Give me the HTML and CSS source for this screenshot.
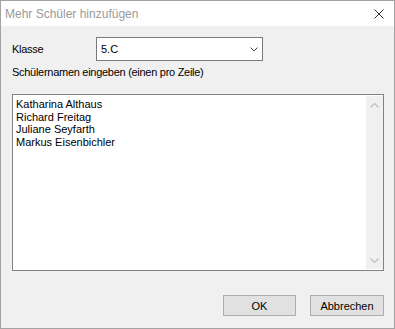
FILE: index.html
```html
<!DOCTYPE html>
<html lang="de">
<head>
<meta charset="utf-8">
<title>Mehr Schüler hinzufügen</title>
<link rel="stylesheet" href="styles.css">
</head>
<body>
<div class="window">
  <div class="titlebar">
    <span class="title">Mehr Schüler hinzufügen</span>
    <svg class="close" width="10" height="10" viewBox="0 0 10 10"><path d="M0.5 0.5 L9.5 9.5 M9.5 0.5 L0.5 9.5" stroke="#333" stroke-width="1" fill="none"/></svg>
  </div>
  <div class="content">
    <div class="row">
      <span class="label">Klasse</span>
      <div class="combo">
        <span class="combo-text">5.C</span>
        <svg class="chev" width="8" height="5" viewBox="0 0 8 5"><path d="M0.5 0.5 L4 4 L7.5 0.5" stroke="#444" stroke-width="1" fill="none"/></svg>
      </div>
    </div>
    <div class="hint">Schülernamen eingeben (einen pro Zeile)</div>
    <div class="memo">
      <div class="memo-text">
        <div class="line">Katharina Althaus</div>
        <div class="line">Richard Freitag</div>
        <div class="line">Juliane Seyfarth</div>
        <div class="line">Markus Eisenbichler</div>
      </div>
      <div class="scrollbar">
        <svg width="9" height="5" viewBox="0 0 9 5"><path d="M0.5 4.5 L4.5 0.5 L8.5 4.5" stroke="#c2c2c2" stroke-width="1.3" fill="none"/></svg>
        <svg width="9" height="5" viewBox="0 0 9 5"><path d="M0.5 0.5 L4.5 4.5 L8.5 0.5" stroke="#c2c2c2" stroke-width="1.3" fill="none"/></svg>
      </div>
    </div>
    <div class="buttons">
      <div class="btn">OK</div>
      <div class="btn">Abbrechen</div>
    </div>
  </div>
</div>
</body>
</html>
```
FILE: styles.css
```css
html, body {
  margin: 0;
  padding: 0;
  background: #f0f0f0;
}
.window {
  box-sizing: border-box;
  width: 395px;
  height: 329px;
  border: 1px solid #a3a3a3;
  background: #f0f0f0;
  display: flex;
  flex-direction: column;
  font-family: "Liberation Sans", Arial, sans-serif;
  font-size: 11px;
  color: #000;
}
.titlebar {
  height: 25px;
  background: #fff;
  display: flex;
  align-items: center;
  justify-content: space-between;
  padding: 0 10px 0 4px;
  flex-shrink: 0;
}
.title {
  font-family: "Liberation Sans", Arial, sans-serif;
  font-size: 12px;
  color: #9a9a9a;
  margin-top: 1px;
}
.close {
  display: block;
}
.content {
  flex: 1;
  display: flex;
  flex-direction: column;
  padding: 11px 10px 0 11px;
}
.row {
  display: flex;
  align-items: center;
  height: 24px;
}
.label {
  width: 84px;
  letter-spacing: -0.3px;
}
.combo {
  box-sizing: border-box;
  width: 167px;
  height: 24px;
  border: 1px solid #7a7a7a;
  background: #fff;
  display: flex;
  align-items: center;
  justify-content: space-between;
  padding: 0 4px 0 4px;
}
.chev {
  display: block;
}
.hint {
  margin-top: 5px;
  line-height: 13px;
  letter-spacing: -0.28px;
}
.memo {
  box-sizing: border-box;
  width: 372px;
  height: 177px;
  margin-top: 15px;
  border: 1px solid #828282;
  background: #fff;
  padding: 1px 0 1px 0;
  display: flex;
}
.memo-text {
  flex: 1;
  padding: 2px 0 0 3px;
}
.line {
  line-height: 12.5px;
  height: 12.5px;
}
.scrollbar {
  width: 17px;
  background: #f0f0f0;
  display: flex;
  flex-direction: column;
  justify-content: space-between;
  align-items: center;
  padding: 7px 0 6px 0;
}
.scrollbar svg {
  display: block;
}
.buttons {
  display: flex;
  justify-content: flex-end;
  gap: 14px;
  margin-top: 24px;
}
.btn {
  box-sizing: border-box;
  width: 73px;
  height: 21px;
  background: #e1e1e1;
  border: 1px solid #adadad;
  display: flex;
  align-items: center;
  justify-content: center;
}
.btn + .btn {
  width: 74px;
}
```
